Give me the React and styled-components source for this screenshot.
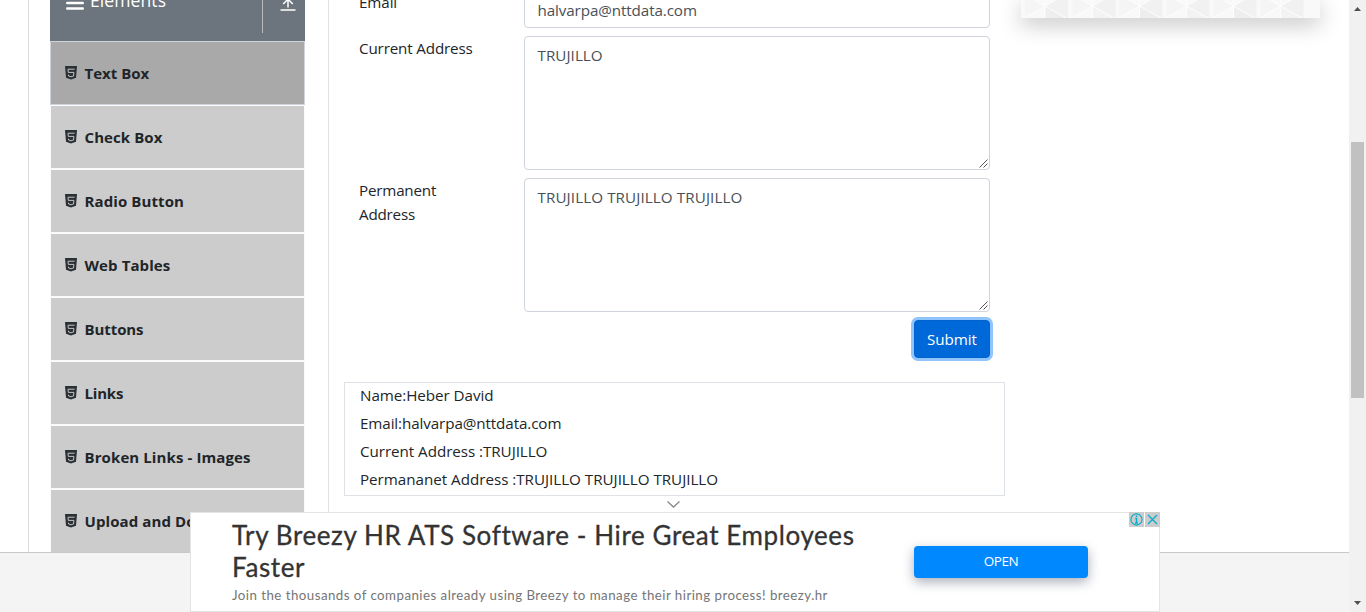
import React from 'react';
import styled, { createGlobalStyle } from 'styled-components';

const GlobalStyle = createGlobalStyle`
  *, *::before, *::after { box-sizing: border-box; }
  body {
    margin: 0;
    overflow: hidden;
    background: #fff;
    color: #212529;
    font: 400 15.2px/24px "Open Sans", "Noto Sans", sans-serif;
  }
`;

const Window = styled.div`
  display: flex;
  width: 1366px;
  height: 612px;
  overflow: hidden;
`;

const Page = styled.div`
  position: relative;
  display: flex;
  flex-direction: column;
  width: 1349px;
  height: 612px;
`;

const Main = styled.main`
  display: flex;
  height: 552px;
  padding-left: 28px;
`;

const Footer = styled.footer`
  flex: 1;
  background: #f4f4f4;
  border-top: 1px solid #c8c8c8;
`;

const SideColumn = styled.aside`
  width: 301px;
  height: 552px;
  padding: 0 23px 0 21px;
  border-left: 1px solid #dcdcdc;
  border-right: 1px solid #dee2e6;
`;

const GroupHeader = styled.div`
  display: flex;
  justify-content: space-between;
  height: 41px;
  padding-left: 16px;
  overflow: hidden;
  background: #6c757d;
  color: #fff;
`;

const GroupTitle = styled.div`
  display: flex;
  align-items: flex-start;
  gap: 6px;
  font-size: 17.5px;
  line-height: 24px;
  letter-spacing: 0.1px;
  svg { margin-top: -4px; }
  span { margin-top: -12px; }
`;

const GroupToggle = styled.div`
  display: flex;
  justify-content: center;
  width: 43px;
  height: 33px;
  padding-left: 7px;
  border-left: 1px solid #b9b9b9;
`;

const MenuList = styled.ul`
  height: 512px;
  margin: 0;
  padding: 0;
  overflow: hidden;
  list-style: none;
`;

const MenuEntry = styled.li`
  display: flex;
  align-items: center;
  gap: 7.5px;
  height: 64px;
  padding-left: 14px;
  border: 1px solid ${(p) => (p.$active ? '#ced4da' : '#fafafa')};
  background: ${(p) => (p.$active ? '#a9a9a9' : '#ccc')};
  font-size: 15px;
  font-weight: 700;
  letter-spacing: ${(p) => p.$spacing}px;
  white-space: nowrap;
`;

const FormColumn = styled.section`
  width: 676px;
  padding-left: 15px;
`;

const FieldRow = styled.div`
  display: flex;
  height: ${(p) => p.$height}px;
  margin-top: ${(p) => p.$top || 0}px;
  margin-bottom: 8px;
`;

const Label = styled.label`
  width: 180px;
  padding-left: 15px;
`;

const LabelText = styled.span`
  display: block;
  width: 125px;
  letter-spacing: ${(p) => p.$spacing || 0}px;
`;

const Control = styled.div`
  display: flex;
  justify-content: space-between;
  width: 466px;
  padding: ${(p) => p.$padTop || 6}px 12px 5px 12.5px;
  border: 1px solid #ced4da;
  border-radius: 4px;
  color: #495057;
  letter-spacing: ${(p) => p.$spacing || 0}px;
`;

const Grip = styled.svg`
  align-self: flex-end;
  margin: 0 -11px -4px 0;
`;

const ButtonRow = styled.div`
  display: flex;
  justify-content: flex-end;
  padding-right: 15px;
`;

const SubmitButton = styled.button`
  width: 76px;
  height: 38px;
  padding: 0;
  border: 1px solid #0062cc;
  border-radius: 4px;
  background: #0069d9;
  box-shadow: 0 0 0 3px #8fc4fd;
  color: #fff;
  font: inherit;
  letter-spacing: -0.05px;
`;

const Output = styled.div`
  width: 661px;
  height: 114px;
  margin-top: 24px;
  padding: 0 15px;
  border: 1px solid #dee2e6;
`;

const OutputLine = styled.p`
  height: 24px;
  margin: 0 0 4px;
  letter-spacing: ${(p) => p.$spacing}px;
  white-space: nowrap;
`;

const SideBanner = styled.div`
  width: 299px;
  height: 18px;
  margin-left: 16px;
  box-shadow: 0 6px 22px rgba(0, 0, 0, 0.25);
  svg { display: block; }
`;

const Anchor = styled.div`
  position: absolute;
  left: 190px;
  bottom: 0;
  display: flex;
  width: 970px;
  height: 100px;
  padding-left: 41px;
  border: 1px solid #e4e4e4;
  background: #fff;
  font-family: Lato, "Open Sans", sans-serif;
`;

const AnchorCopy = styled.div`
  width: 682px;
  padding-top: 6px;
`;

const Headline = styled.div`
  color: #333;
  font-size: 26px;
  line-height: 32px;
  letter-spacing: 0.6px;
  white-space: nowrap;
  -webkit-text-stroke: 0.3px #333;
`;

const Tagline = styled.div`
  margin-top: 3px;
  color: #757575;
  font-size: 13.3px;
  line-height: 18px;
  letter-spacing: 0.46px;
  white-space: nowrap;
`;

const OpenButton = styled.button`
  width: 174px;
  height: 32px;
  margin-top: 33px;
  padding: 0 0 2px;
  border: 0;
  border-radius: 4px;
  background: #0088ff;
  box-shadow: 0 4px 12px rgba(20, 30, 60, 0.36);
  color: #fff;
  font: 13.5px "Open Sans", sans-serif;
  letter-spacing: -0.5px;
`;

const AdControls = styled.div`
  position: absolute;
  top: -1px;
  right: -1px;
  display: flex;
  gap: 1px;
`;

const AdControl = styled.span`
  width: 15px;
  height: 15px;
  background: #ccc;
  svg { display: block; }
`;

const Collapse = styled.svg`
  position: absolute;
  top: 500px;
  left: 666px;
`;

const Scrollbar = styled.div`
  display: flex;
  flex-direction: column;
  align-items: center;
  width: 17px;
  background: #f1f1f1;
`;

const Thumb = styled.div`
  width: 13px;
  height: 256px;
  margin: 125px 0 197px;
  background: #c1c1c1;
`;

const entries = [
  ['Text Box', 0],
  ['Check Box', 0.08],
  ['Radio Button', 0.1],
  ['Web Tables', 0.1],
  ['Buttons', -0.08],
  ['Links', -0.18],
  ['Broken Links - Images', 0.1],
  ['Upload and Download', 0.1],
];

const results = [
  ['Name:Heber David', -0.05],
  ['Email:halvarpa@nttdata.com', -0.1],
  ['Current Address :TRUJILLO', -0.05],
  ['Permananet Address :TRUJILLO TRUJILLO TRUJILLO', -0.02],
];

const Html5Icon = () => (
  <svg width="12" height="14" viewBox="0 0 12 14">
    <path d="M0 0h12l-1 11.8L6 13.6 1 11.8z" fill="#2b3035" />
    <path d="M9.6 3.2H3l.3 3.2h5.6l-.35 3.6L6 10.8l-2.4-.8-.1-1.3" fill="none" stroke="#c4c4c4" strokeWidth="1" />
  </svg>
);

const MenuIcon = () => (
  <svg width="18" height="15" viewBox="0 0 18 15">
    <path d="M1.2 1.5h15.6M1.2 7h15.6M1.2 12.5h15.6" stroke="#fff" strokeWidth="2.4" strokeLinecap="round" />
  </svg>
);

const CollapseIcon = () => (
  <svg width="16" height="12" viewBox="0 0 16 12">
    <path d="M.5 10h15M8 7.5V-6M3.2 4L8-.8 12.8 4" fill="none" stroke="#fff" strokeWidth="1.5" />
  </svg>
);

const ResizeGrip = () => (
  <Grip width="9" height="9" viewBox="0 0 9 9">
    <path d="M.5 8.5l8-8M4.5 8.5l4-4" stroke="#555" strokeWidth="1" />
  </Grip>
);

const starCenters = [24, 71.5, 118.5, 165.5, 212.5, 259.5];

const TrianglePattern = () => (
  <svg width="299" height="18" viewBox="0 0 299 18">
    <rect width="299" height="18" fill="#f9f9f9" />
    {starCenters.map((x, i) => (
      <g key={x}>
        <path d={`M${x} 6L${x + 22} 18H${x}z`} fill={i % 2 ? '#f3f3f3' : '#eee'} />
        <path d={`M${x} 6L${x + 23} -7V18z`} fill="#f1f1f1" />
        <path d={`M${x} 6L${x - 20} -5V17z`} fill="#f5f5f5" />
        <path d={`M${x - 21} 18L${x + 21} -6M${x - 21} -6L${x + 21} 18M${x} 0V18`} stroke="#fdfdfd" strokeWidth="1" />
      </g>
    ))}
  </svg>
);

export default function App() {
  return (
    <>
      <GlobalStyle />
      <Window>
        <Page>
          <Main>
            <SideColumn>
              <GroupHeader>
                <GroupTitle>
                  <MenuIcon />
                  <span>Elements</span>
                </GroupTitle>
                <GroupToggle>
                  <CollapseIcon />
                </GroupToggle>
              </GroupHeader>
              <MenuList>
                {entries.map(([name, spacing], i) => (
                  <MenuEntry key={name} $active={i === 0} $spacing={spacing}>
                    <Html5Icon />
                    {name}
                  </MenuEntry>
                ))}
              </MenuList>
            </SideColumn>
            <FormColumn>
              <FieldRow $height={38} $top={-10}>
                <Label><LabelText $spacing={-0.1}>Email</LabelText></Label>
                <Control $padTop={7} $spacing={-0.1}>halvarpa@nttdata.com</Control>
              </FieldRow>
              <FieldRow $height={134}>
                <Label><LabelText $spacing={-0.15}>Current Address</LabelText></Label>
                <Control $spacing={0.05}>TRUJILLO<ResizeGrip /></Control>
              </FieldRow>
              <FieldRow $height={134}>
                <Label><LabelText $spacing={-0.2}>Permanent Address</LabelText></Label>
                <Control $spacing={0.1}>TRUJILLO TRUJILLO TRUJILLO<ResizeGrip /></Control>
              </FieldRow>
              <ButtonRow><SubmitButton>Submit</SubmitButton></ButtonRow>
              <Output>
                {results.map(([text, spacing]) => (
                  <OutputLine key={text} $spacing={spacing}>{text}</OutputLine>
                ))}
              </Output>
            </FormColumn>
            <SideBanner><TrianglePattern /></SideBanner>
          </Main>
          <Footer />
          <Collapse width="15" height="9" viewBox="0 0 15 9">
            <path d="M1.5 1.5l6 5.5 6-5.5" fill="none" stroke="#888" strokeWidth="1.3" />
          </Collapse>
          <Anchor>
            <AnchorCopy>
              <Headline>Try Breezy HR ATS Software - Hire Great Employees</Headline>
              <Headline>Faster</Headline>
              <Tagline>Join the thousands of companies already using Breezy to manage their hiring process! breezy.hr</Tagline>
            </AnchorCopy>
            <OpenButton>OPEN</OpenButton>
            <AdControls>
              <AdControl>
                <svg width="15" height="15" viewBox="0 0 15 15">
                  <circle cx="7.5" cy="7.5" r="5.6" fill="none" stroke="#00aecd" strokeWidth="1.1" />
                  <path d="M7.5 3.5v1.6M6.3 6.5h1.2v4.5M6 11h3" fill="none" stroke="#00aecd" strokeWidth="1.4" />
                </svg>
              </AdControl>
              <AdControl>
                <svg width="15" height="15" viewBox="0 0 15 15">
                  <path d="M3 3l9 9M12 3l-9 9" stroke="#00aecd" strokeWidth="1.3" />
                </svg>
              </AdControl>
            </AdControls>
          </Anchor>
        </Page>
        <Scrollbar>
          <svg width="17" height="17" viewBox="0 0 17 17"><path d="M5 11l3.5-4 3.5 4z" fill="#505050" /></svg>
          <Thumb />
          <svg width="17" height="17" viewBox="0 0 17 17"><path d="M5 6l3.5 4L12 6z" fill="#505050" /></svg>
        </Scrollbar>
      </Window>
    </>
  );
}
